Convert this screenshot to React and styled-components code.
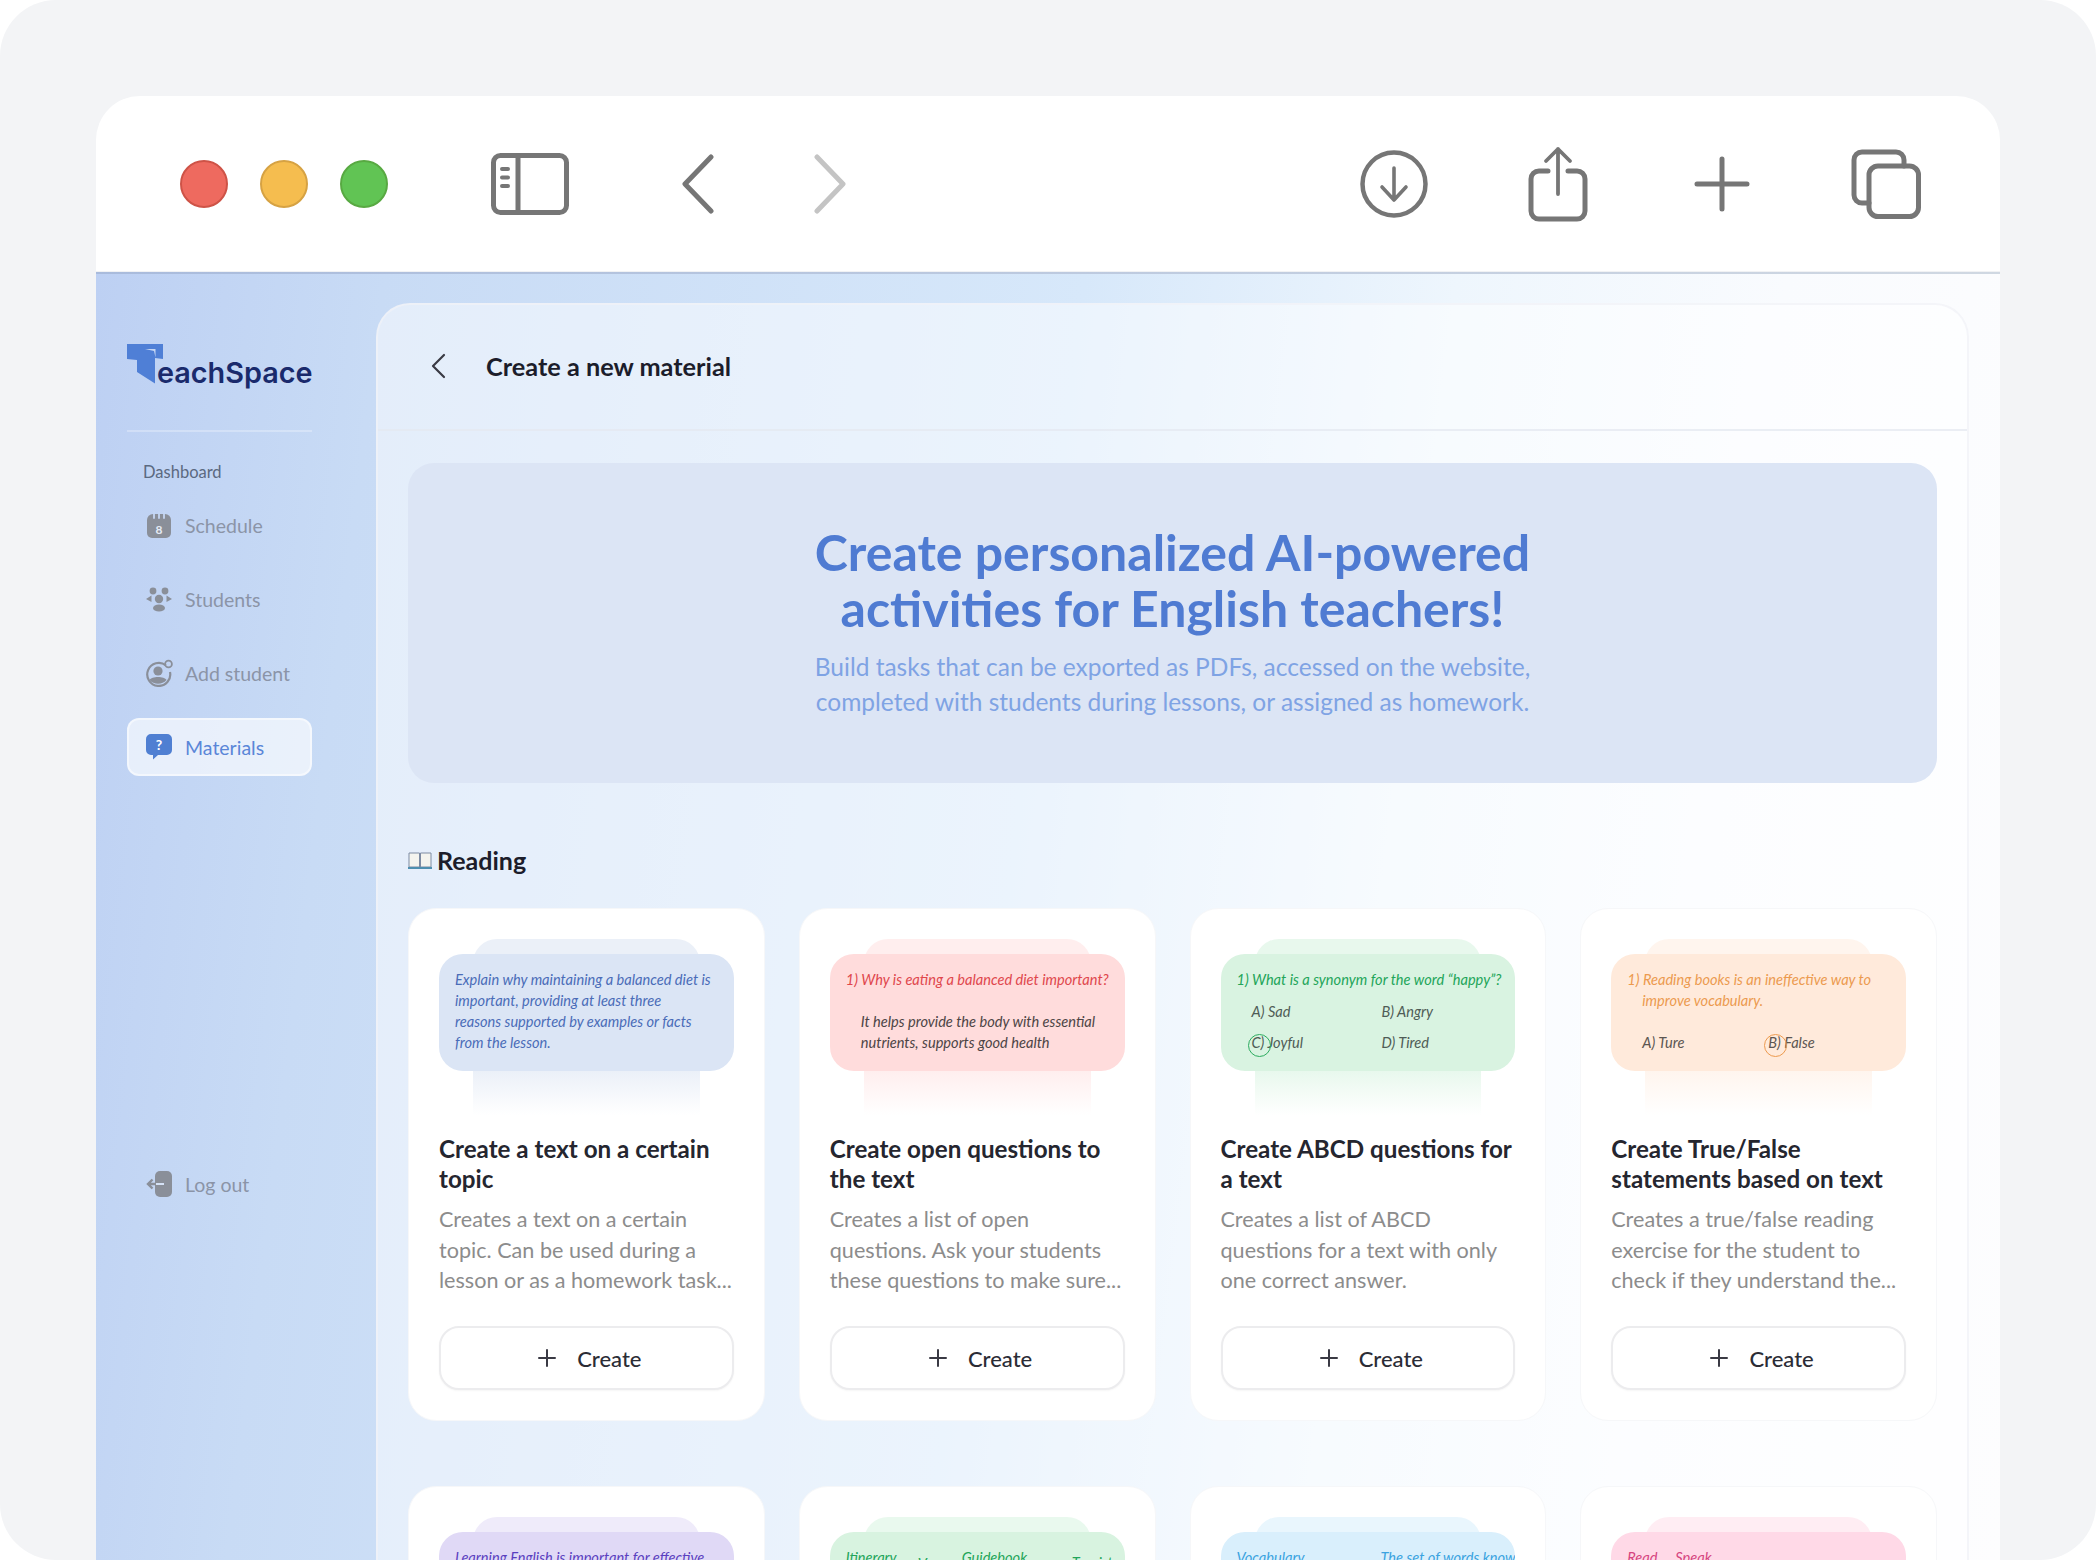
import React from "react";
import styled, { createGlobalStyle } from "styled-components";

const Global = createGlobalStyle`
  html, body { margin: 0; padding: 0; background: #fff; }
  body { font-family: "Lato", "Noto Sans", sans-serif; }
  * { box-sizing: border-box; }
`;

const Page = styled.div`
  width: 2096px; height: 1560px; overflow: hidden; background: #f3f4f6;
  border-radius: 56px; padding: 96px 96px 0;
`;
const Win = styled.div`
  height: 1464px; background: #fff; overflow: hidden; border-radius: 44px 44px 0 0;
  display: flex; flex-direction: column;
`;
const Toolbar = styled.header`
  height: 178px; flex: none; display: flex; align-items: center; justify-content: space-between;
  padding: 0 79px 0 84px; border-bottom: 2px solid;
  border-image: linear-gradient(to right, #a9bbdc, #d0d8e2) 1;
  box-shadow: inset 0 -1px 0 #f1f2f4;
`;
const Group = styled.div`display: flex; align-items: center; gap: ${p => p.$gap}px;`;
const Dot = styled.span`
  width: 48px; height: 48px; border-radius: 50%; background: ${p => p.$c}; border: 2px solid ${p => p.$b};
  flex: none;
`;
const Tool = styled.svg`
  display: block; flex: none; margin-left: ${p => p.$ml || 0}px; fill: none; stroke: ${p => p.$c || "#767676"};
  stroke-linecap: round; stroke-linejoin: round;
`;
const Body = styled.div`
  flex: 1; display: flex; min-height: 0;
  background: linear-gradient(97deg, #bdd0f3 0%, #c8dbf5 14%, #d7e8fa 48%, #eef6fd 66%, #f9fbfe 82%, #fdfdfe 100%);
`;
const Side = styled.aside`
  width: 280px; flex: none; padding: 70px 64px 0 31px; display: flex; flex-direction: column;
`;
const Logo = styled.div`display: flex; align-items: flex-start; height: 50px; margin-bottom: 36px;`;
const LogoText = styled.span`
  font-family: "Inter", "Lato", sans-serif;
  font-size: 28.8px; font-weight: 600; color: #1a2a6c; margin: 11px 0 0 -6px; line-height: 36px;
`;
const Rule = styled.div`height: 2px; background: rgba(255,255,255,.28); margin-bottom: 30px;`;
const NavHead = styled.div`font-size: 16.5px; color: #5b6980; padding-left: 16px; line-height: 20px; margin-bottom: 14px;`;
const Nav = styled.nav`display: flex; flex-direction: column; gap: 16px;`;
const NavItem = styled.div`
  height: 58px; display: flex; align-items: center; gap: 12px; padding-left: 16px; border-radius: 12px;
  font-size: 19.5px; color: ${p => p.$active ? "#5a86d8" : "#8b94a7"};
  background: ${p => p.$active ? "rgba(255,255,255,.62)" : "transparent"};
  border: 2px solid ${p => p.$active ? "rgba(255,255,255,.5)" : "transparent"};
  margin-top: ${p => p.$mt || 0}px;
`;
const NavIco = styled.svg`display: block; flex: none; width: 28px; height: 28px;`;
const Panel = styled.main`
  flex: 1; min-width: 0; margin: 29px 31px 0 0; background: rgba(255,255,255,.5);
  border: 2px solid rgba(240,242,247,.75); border-bottom: 0; border-radius: 34px 34px 0 0;
`;
const PanelHead = styled.div`
  height: 126px; display: flex; align-items: center; gap: 40px; padding: 0 0 2px 52px;
  border-bottom: 2px solid rgba(228,232,240,.75);
`;
const PanelTitle = styled.h1`margin: 0; font-size: 25.3px; font-weight: 700; color: #1c1d2b;`;
const Content = styled.div`padding: 32px 30px 0;`;
const Hero = styled.section`
  height: 320px; background: #dce5f5; border-radius: 26px; display: flex; flex-direction: column;
  align-items: center; justify-content: center; text-align: center; padding-bottom: 4px;
`;
const HeroTitle = styled.h2`margin: 0 0 12px; font-size: 50px; line-height: 56.5px; font-weight: 700; color: #4f7bd2;`;
const HeroSub = styled.p`margin: 0; font-size: 24.5px; line-height: 35px; color: #7fa3e4;`;
const SectionHead = styled.h3`
  margin: 61px 0 32px; height: 32px; display: flex; align-items: center; gap: 5px;
  font-size: 25px; font-weight: 700; color: #1c1d2b;
`;
const Grid = styled.div`display: grid; grid-template-columns: repeat(4, minmax(0, 1fr)); gap: 65px 34px;`;
const Card = styled.article`
  height: 513px; background: #fff; border: 1px solid #f6f7f9; border-radius: 28px; padding: 30px;
  display: flex; flex-direction: column;
`;
const Preview = styled.div`position: relative; height: 176px; padding-top: 15px; flex: none;`;
const PreviewBack = styled.div`
  position: absolute; inset: 0 34px; border-radius: 24px 24px 0 0;
  background: linear-gradient(to bottom, ${p => p.$c} 0, ${p => p.$c} 75%, rgba(255,255,255,0) 100%);
`;
const PreviewFront = styled.div`
  position: relative; height: 117px; border-radius: 24px; background: ${p => p.$bg}; padding: 15px 16px 0;
  font-size: 14.6px; line-height: 21px; font-style: italic; color: ${p => p.$c};
  white-space: nowrap; overflow: hidden;
`;
const Line = styled.div`height: 21px; padding-left: ${p => p.$in || 0}px; color: ${p => p.$c || "inherit"};`;
const Options = styled.div`
  display: grid; grid-template-columns: ${p => p.$w}px 1fr; height: 21px;
  padding-left: ${p => p.$pad ?? 15}px; margin-top: ${p => p.$mt || 0}px; color: ${p => p.$c};
`;
const Words = styled.div`display: flex; height: 21px;`;
const Word = styled.span`flex: none; width: ${p => p.$w}px; padding-top: ${p => p.$dy || 0}px;`;
const Circled = styled.span`
  position: relative;
  &::before {
    content: ""; position: absolute; left: -4px; top: 0; width: 21px; height: 21px; border-radius: 50%;
    border: 1.5px solid ${p => p.$c};
  }
`;
const Title = styled.h4`margin: 19px 0 0; font-size: 24.2px; line-height: 30px; font-weight: 700; color: #25262f;`;
const Desc = styled.p`margin: 10px 0 0; font-size: 21.6px; line-height: 30.5px; color: #8c8c8c; white-space: nowrap;`;
const Btn = styled.button`
  margin-top: auto; height: 64px; width: 100%; flex: none; background: #fff; border: 2px solid #ececee; border-radius: 20px;
  display: flex; align-items: center; justify-content: center; gap: 20px; padding: 0 0 0 6px;
  font: 500 22px "Lato", sans-serif; color: #2b2c35; box-shadow: 0 1px 2px rgba(0,0,0,.04);
`;

const cards = [
  { bg: "#dbe5f5", back: "#ebf0f8", c: "#4a6cb8", title: "Create a text on a certain topic",
    desc: ["Creates a text on a certain", "topic. Can be used during a", "lesson or as a homework task..."],
    body: () => <>
      <Line>Explain why maintaining a balanced diet is</Line>
      <Line>important, providing at least three</Line>
      <Line>reasons supported by examples or facts</Line>
      <Line>from the lesson.</Line></> },
  { bg: "#ffdcdc", back: "#ffeeee", c: "#e0474c", title: "Create open questions to the text",
    desc: ["Creates a list of open", "questions. Ask your students", "these questions to make sure..."],
    body: () => <>
      <Line>1) Why is eating a balanced diet important?</Line>
      <Line />
      <Line $in={15} $c="#4c4445">It helps provide the body with essential</Line>
      <Line $in={15} $c="#4c4445">nutrients, supports good health</Line></> },
  { bg: "#d9f3e1", back: "#e8f8ed", c: "#22a559", title: "Create ABCD questions for a text",
    desc: ["Creates a list of ABCD", "questions for a text with only", "one correct answer."],
    body: () => <>
      <Line>1) What is a synonym for the word “happy”?</Line>
      <Options $w={130} $mt={11} $c="#4f5c56"><span>A) Sad</span><span>B) Angry</span></Options>
      <Options $w={130} $mt={10} $c="#4f5c56"><span><Circled $c="#2dab5f">C)</Circled> Joyful</span><span>D) Tired</span></Options></> },
  { bg: "#ffeadb", back: "#fff5ee", c: "#ec9a4f", title: "Create True/False statements based on text",
    desc: ["Creates a true/false reading", "exercise for the student to", "check if they understand the..."],
    body: () => <>
      <Line>1) Reading books is an ineffective way to</Line>
      <Line $in={15}>improve vocabulary.</Line>
      <Line />
      <Options $w={126} $c="#5c5651"><span>A) Ture</span><span><Circled $c="#ec9a4f">B)</Circled> False</span></Options></> },
  { bg: "#e0d9f6", back: "#efebfa", c: "#5a3fc0", body: () => <Line>Learning English is important for effective</Line> },
  { bg: "#d8f3e0", back: "#e9f9ee", c: "#22a559", body: () => (
    <Words>
      <Word $w={72}>Itinerary</Word><Word $w={44} $dy={6}>V</Word>
      <Word $w={110}>Guidebook</Word><Word $w={60} $dy={5}>Tourist</Word>
    </Words>) },
  { bg: "#d9effc", back: "#e9f6fd", c: "#3aa3e0", body: () => <Options $w={144} $pad={0} $c="#3aa3e0"><span>Vocabulary</span><span>The set of words known</span></Options> },
  { bg: "#ffd9e7", back: "#ffedf3", c: "#d6457f", body: () => <Options $w={48} $pad={0} $c="#d6457f"><span>Read</span><span>Speak</span></Options> },
];

const Chevron = ({ dir, c, ml }) => (
  <Tool $ml={ml} $c={c} width="34" height="60" viewBox="0 0 34 60" strokeWidth="5">
    <path d={dir === "l" ? "M30 3 L4 30 L30 57" : "M4 3 L30 30 L4 57"} />
  </Tool>
);

const TMark = () => (
  <svg width="36" height="40" viewBox="0 0 36 40" style={{ display: "block", flex: "none" }}>
    <path d="M0 0H36V15L28 14V39.500L10 28V16L0 15Z" fill="#4f7fd6" />
    <path d="M18 5H28.500V13.500L27 7Z" fill="#c5d6f3" />
  </svg>
);

const gray = "#8a8f99";

export default function App() {
  return (
    <>
      <Global />
      <Page>
        <Win>
          <Toolbar>
            <Group $gap={0}>
              <Group $gap={32}>
                <Dot $c="#ee6a5f" $b="#ce5347" />
                <Dot $c="#f5bd4f" $b="#d6a243" />
                <Dot $c="#61c454" $b="#58a942" />
              </Group>
              <Tool $ml={103} width="78" height="62" viewBox="0 0 78 62" strokeWidth="5">
                <rect x="2.5" y="2.5" width="73" height="57" rx="7" />
                <path d="M27 3V59" />
                <path d="M11 16H17M11 24.5H17M11 33H17" strokeWidth="4" />
              </Tool>
              <Chevron dir="l" ml={112} />
              <Chevron dir="r" ml={98} c="#c4c4c4" />
            </Group>
            <Group $gap={0}>
              <Tool width="68" height="68" viewBox="0 0 68 68" strokeWidth="4.5">
                <circle cx="34" cy="34" r="31.5" />
                <path d="M34 18V49M22 37L34 50L46 37" strokeWidth="3.6" />
              </Tool>
              <Tool $ml={100} width="60" height="76" viewBox="0 0 60 76" strokeWidth="5">
                <path d="M20 25H11a8 8 0 0 0-8 8V65a8 8 0 0 0 8 8H49a8 8 0 0 0 8-8V33a8 8 0 0 0-8-8H40" />
                <path d="M30 3V48M18 15L30 3L42 15" strokeWidth="3.8" />
              </Tool>
              <Tool $ml={106} width="56" height="56" viewBox="0 0 56 56" strokeWidth="5">
                <path d="M3 28H53M28 3V53" />
              </Tool>
              <Tool $ml={101} width="70" height="70" viewBox="0 0 70 70" strokeWidth="5">
                <path d="M18 54H11a8 8 0 0 1-8-8V11a8 8 0 0 1 8-8H45a8 8 0 0 1 8 8V17" />
                <rect x="18" y="17" width="49.5" height="50.5" rx="9" />
              </Tool>
            </Group>
          </Toolbar>
          <Body>
            <Side>
              <Logo><TMark /><LogoText>eachSpace</LogoText></Logo>
              <Rule />
              <NavHead>Dashboard</NavHead>
              <Nav>
                <NavItem>
                  <NavIco viewBox="0 0 28 28">
                    <path d="M2 9a6 6 0 0 1 6-6h12a6 6 0 0 1 6 6v13a5 5 0 0 1-5 5H7a5 5 0 0 1-5-5Z" fill={gray} />
                    <path d="M9 1v6M14 1v6M19 1v6" stroke="#c5d7f4" strokeWidth="1.8" strokeLinecap="round" />
                    <text x="14" y="23" textAnchor="middle" fontSize="12" fontWeight="700" fontFamily="Lato, sans-serif" fill="#e5ebf5">8</text>
                  </NavIco>
                  Schedule
                </NavItem>
                <NavItem>
                  <NavIco viewBox="0 0 28 28" fill={gray}>
                    <circle cx="8" cy="6" r="3.4" /><circle cx="20" cy="6" r="3.4" />
                    <circle cx="14" cy="14" r="4.2" /><ellipse cx="14" cy="23" rx="6" ry="3.6" />
                    <path d="M6.5 10.5V17L1 14ZM21.5 10.5V17L27 14Z" />
                  </NavIco>
                  Students
                </NavItem>
                <NavItem>
                  <NavIco viewBox="0 0 28 28">
                    <path d="M21 6.5A11.5 11.5 0 1 0 25 13" fill="none" stroke={gray} strokeWidth="2.2" />
                    <circle cx="13" cy="12" r="4.6" fill={gray} />
                    <path d="M4.5 21c2-4 15-4 17 0a11.5 11.5 0 0 1-17 0Z" fill={gray} />
                    <circle cx="23.5" cy="5" r="3.4" fill="none" stroke={gray} strokeWidth="1.8" />
                  </NavIco>
                  Add student
                </NavItem>
                <NavItem $active>
                  <NavIco viewBox="0 0 28 28">
                    <path d="M6 1h16a5 5 0 0 1 5 5v11a5 5 0 0 1-5 5H13l-5 4.500V22H6a5 5 0 0 1-5-5V6a5 5 0 0 1 5-5Z" fill="#4f7fd2" />
                    <text x="14" y="17" textAnchor="middle" fontSize="14" fontWeight="700" fontFamily="Lato, sans-serif" fill="#fff">?</text>
                  </NavIco>
                  Materials
                </NavItem>
                <NavItem $mt={363}>
                  <NavIco viewBox="0 0 28 28">
                    <rect x="10" y="1" width="17" height="26" rx="5" fill={gray} />
                    <path d="M19 14H3M7.500 9.500L3 14l4.500 4.500" fill="none" stroke={gray} strokeWidth="2.400" />
                    <path d="M11 14H19" stroke="#d5e2f6" strokeWidth="2" />
                  </NavIco>
                  Log out
                </NavItem>
              </Nav>
            </Side>
            <Panel>
              <PanelHead>
                <Tool $c="#3a3a44" width="16" height="26" viewBox="0 0 16 26" strokeWidth="2.200">
                  <path d="M14 2L3 13L14 24" />
                </Tool>
                <PanelTitle>Create a new material</PanelTitle>
              </PanelHead>
              <Content>
                <Hero>
                  <HeroTitle>Create personalized AI-powered<br />activities for English teachers!</HeroTitle>
                  <HeroSub>Build tasks that can be exported as PDFs, accessed on the website,<br />completed with students during lessons, or assigned as homework.</HeroSub>
                </Hero>
                <SectionHead>
                  <svg width="24" height="20" viewBox="0 0 24 20">
                    <path d="M1 3h10.500v14H1Z" fill="#f4f4ef" stroke="#7d8ba3" />
                    <path d="M12.500 3H23v14H12.500Z" fill="#f4f4ef" stroke="#7d8ba3" />
                    <path d="M0 17h24v2H0Z" fill="#4e8fb0" />
                  </svg>
                  Reading
                </SectionHead>
                <Grid>
                  {cards.map((k, i) => (
                    <Card key={i}>
                      <Preview>
                        <PreviewBack $c={k.back} />
                        <PreviewFront $bg={k.bg} $c={k.c}>{k.body()}</PreviewFront>
                      </Preview>
                      {k.title && <Title>{k.title}</Title>}
                      {k.desc && <Desc>{k.desc.map((l, j) => <React.Fragment key={j}>{l}<br /></React.Fragment>)}</Desc>}
                      {k.title && (
                        <Btn>
                          <svg width="20" height="20" viewBox="0 0 20 20" stroke="#3a3a44" strokeWidth="2" strokeLinecap="round"><path d="M2 10H18M10 2V18" /></svg>
                          Create
                        </Btn>
                      )}
                    </Card>
                  ))}
                </Grid>
              </Content>
            </Panel>
          </Body>
        </Win>
      </Page>
    </>
  );
}
